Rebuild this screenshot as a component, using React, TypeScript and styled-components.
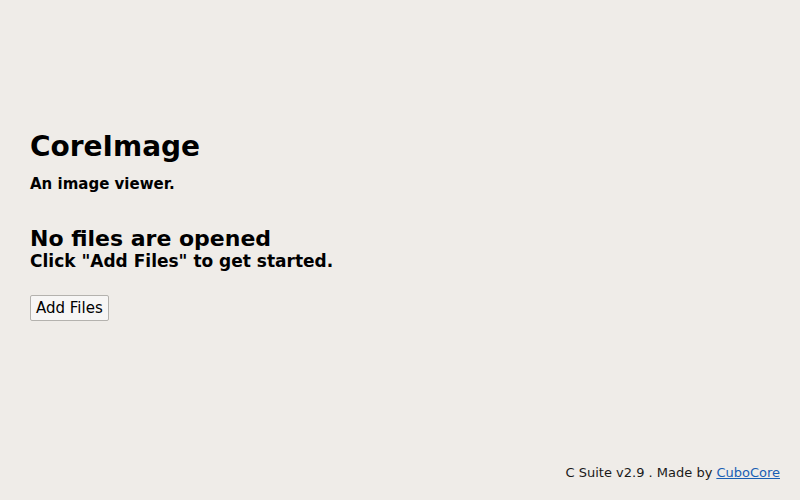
import styled, { createGlobalStyle } from 'styled-components'

const GlobalStyle = createGlobalStyle`
  html, body {
    margin: 0;
    padding: 0;
    background: #efece8;
  }
  body {
    font-family: "DejaVu Sans", sans-serif;
    color: #000000;
  }
`

const Page = styled.div`
  width: 800px;
  height: 500px;
  display: flex;
  flex-direction: column;
  justify-content: space-between;
  box-sizing: border-box;
`

const Main = styled.main`
  padding: 131px 30px 0 30px;
  display: flex;
  flex-direction: column;
  align-items: flex-start;
`

const Title = styled.h1`
  margin: 0;
  font-size: 28px;
  line-height: 32px;
  font-weight: bold;
`

const Tagline = styled.p`
  margin: 11px 0 0 0;
  font-size: 15px;
  line-height: 20px;
  font-weight: bold;
`

const Heading = styled.h2`
  margin: 33px 0 0 0;
  font-size: 22px;
  line-height: 24px;
  font-weight: bold;
`

const Hint = styled.p`
  margin: 0;
  font-size: 17px;
  line-height: 20px;
  font-weight: bold;
`

const AddButton = styled.button`
  margin-top: 24px;
  height: 26px;
  padding: 0 5px;
  font-family: "DejaVu Sans", sans-serif;
  font-size: 15px;
  color: #000000;
  background: #f7f6f5;
  border: 1px solid #b4b2ae;
  border-radius: 2px;
`

const Footer = styled.footer`
  display: flex;
  justify-content: flex-end;
  gap: 4px;
  padding: 0 20px 19px 0;
  font-size: 13px;
  line-height: 16px;
  color: #1a1a1a;
`

const Link = styled.a`
  color: #1a5fb4;
  text-decoration: underline;
`

const App = () => {
  return (
    <>
      <GlobalStyle />
      <Page>
        <Main>
          <Title>{"CoreImage"}</Title>
          <Tagline>{"An image viewer."}</Tagline>
          <Heading>{"No files are opened"}</Heading>
          <Hint>{'Click "Add Files" to get started.'}</Hint>
          <AddButton>{"Add Files"}</AddButton>
        </Main>
        <Footer>
          <span>{"C Suite v2.9 . Made by"}</span>
          <Link href="#">{"CuboCore"}</Link>
        </Footer>
      </Page>
    </>
  )
}

export default App
